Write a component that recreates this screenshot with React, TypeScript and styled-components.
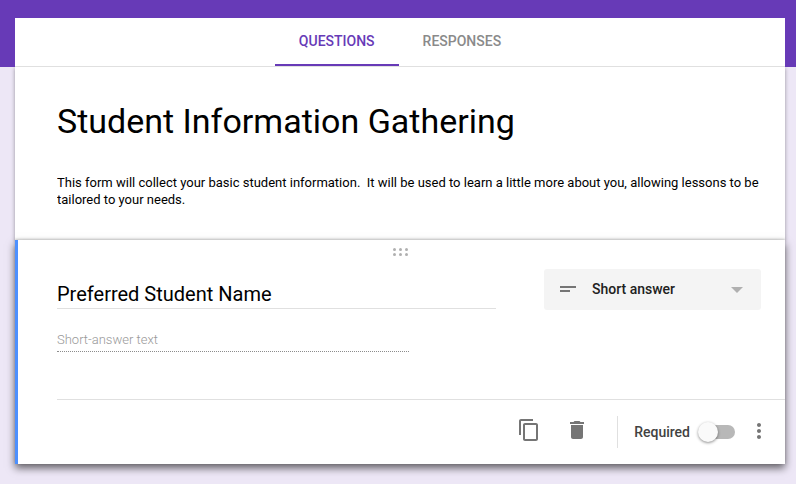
import React from "react";
import styled, { createGlobalStyle } from "styled-components";

const GlobalStyle = createGlobalStyle`
  * { box-sizing: border-box; }
  body {
    margin: 0;
    background: #ede7f6;
    font-family: Roboto, "Liberation Sans", sans-serif;
    color: #000;
  }
  button, input, textarea, select { font: inherit; color: inherit; }
`;

const Banner = styled.header`
  position: relative;
  z-index: 1;
  padding: 18px 11px 0 15px;
  background: #673ab7;
`;

const Tabs = styled.nav`
  display: flex;
  justify-content: center;
  background: #fff;
  border-bottom: 1px solid #e0e0e0;
`;

const Tab = styled.button<{ $active?: boolean }>`
  height: 48px;
  padding: 0 24px;
  border: 0;
  border-bottom: 2px solid ${(p) => (p.$active ? "#673ab7" : "transparent")};
  background: none;
  font-size: 14px;
  font-weight: 500;
  line-height: 20px;
  color: ${(p) => (p.$active ? "#673ab7" : "#8a8a8a")};
  cursor: pointer;
`;

const Main = styled.main`
  padding: 0 11px 20px 15px;
`;

const FormHeader = styled.section`
  padding: 32px 24px 32px 42px;
  background: #fff;
  box-shadow: 0 1px 4px rgba(0, 0, 0, 0.37);
`;

const FormTitle = styled.input`
  display: block;
  width: 100%;
  height: 44px;
  padding: 0;
  border: 0;
  outline: 0;
  background: none;
  font-size: 34px;
  line-height: 44px;
`;

const Description = styled.textarea`
  display: block;
  width: 100%;
  height: 34px;
  margin-top: 31px;
  padding: 0;
  border: 0;
  outline: 0;
  resize: none;
  overflow: hidden;
  background: none;
  font-size: 13px;
  line-height: 17px;
`;

const QuestionCard = styled.section`
  border-left: 3px solid #4d90fe;
  background: #fff;
  box-shadow:
    0 -1px 2px rgba(0, 0, 0, 0.16),
    0 4px 8px rgba(0, 0, 0, 0.6);
`;

const DragHandle = styled.button`
  display: flex;
  justify-content: center;
  width: 100%;
  height: 29px;
  padding: 8px 0 0;
  border: 0;
  background: none;
  color: #b0b0b0;
  cursor: move;
`;

const QuestionBody = styled.div`
  padding: 0 24px 47px 39px;
`;

const QuestionRow = styled.div`
  display: flex;
  align-items: flex-start;
  gap: 48px;
`;

const QuestionTitle = styled.input`
  flex: 1;
  min-width: 0;
  height: 40px;
  padding: 10px 0 0;
  border: 0;
  border-bottom: 1px solid #e0e0e0;
  outline: 0;
  background: none;
  font-size: 20px;
`;

const TypePicker = styled.div`
  position: relative;
  width: 217px;
  color: #757575;
`;

const TypeSelect = styled.select`
  display: block;
  appearance: none;
  width: 100%;
  height: 41px;
  padding: 0 40px 2px 48px;
  border: 0;
  border-radius: 3px;
  background: #f4f4f4;
  font-size: 14px;
  font-weight: 500;
  color: #212121;
`;

const TypeIcon = styled.svg`
  position: absolute;
  left: 12px;
  top: 8px;
  pointer-events: none;
`;

const Caret = styled.svg`
  position: absolute;
  right: 18px;
  top: 18px;
  color: #b0b0b0;
  pointer-events: none;
`;

const ShortAnswer = styled.input`
  display: block;
  width: 50%;
  height: 24px;
  margin-top: 18px;
  padding: 0;
  border: 0;
  border-bottom: 1px dotted #8c8c8c;
  outline: 0;
  background: none;
  font-size: 13px;
  &::placeholder {
    color: #999;
    font-weight: 300;
    opacity: 1;
  }
`;

const Footer = styled.footer`
  display: flex;
  align-items: center;
  justify-content: flex-end;
  height: 65px;
  margin-left: 39px;
  padding-right: 14px;
  border-top: 1px solid #e0e0e0;
`;

const Actions = styled.div`
  display: flex;
  gap: 24px;
  padding-bottom: 4px;
`;

const IconButton = styled.button`
  display: flex;
  padding: 0;
  border: 0;
  background: none;
  color: #757575;
  cursor: pointer;
`;

const MoreButton = styled(IconButton)`
  padding-bottom: 2px;
`;

const Divider = styled.div`
  width: 1px;
  height: 32px;
  margin: 0 16px 0 28px;
  background: #e0e0e0;
`;

const RequiredLabel = styled.label`
  display: flex;
  align-items: center;
  gap: 8px;
  margin-right: 12px;
  font-size: 14px;
  font-weight: 500;
  color: #424242;
`;

const Switch = styled.input`
  position: relative;
  appearance: none;
  width: 37px;
  height: 20px;
  margin: 0;
  cursor: pointer;
  &::before {
    content: "";
    position: absolute;
    inset: 3px 0 3px 2px;
    border-radius: 7px;
    background: #b8b8b8;
  }
  &::after {
    content: "";
    position: absolute;
    left: 0;
    top: 0;
    width: 20px;
    height: 20px;
    border-radius: 50%;
    background: #fafafa;
    box-shadow: 0 1px 3px rgba(0, 0, 0, 0.45);
  }
  &:checked::before { background: #b39ddb; }
  &:checked::after { left: 17px; background: #673ab7; }
`;

const Icon = ({ d }: { d: string }) => (
  <svg width="24" height="24" viewBox="0 0 24 24" fill="currentColor" aria-hidden="true">
    <path d={d} />
  </svg>
);

const COPY =
  "M16 1H4c-1.1 0-2 .9-2 2v14h2V3h12V1zm3 4H8c-1.1 0-2 .9-2 2v14c0 1.1.9 2 2 2h11c1.1 0 2-.9 2-2V7c0-1.1-.9-2-2-2zm0 16H8V7h11v14z";
const TRASH =
  "M6 19c0 1.1.9 2 2 2h8c1.1 0 2-.9 2-2V7H6v12zM19 4h-3.500l-1-1h-5l-1 1H5v2h14V4z";
const MORE =
  "M12 8c1.100 0 2-.9 2-2s-.9-2-2-2-2 .9-2 2 .9 2 2 2zm0 2c-1.100 0-2 .9-2 2s.9 2 2 2 2-.9 2-2-.9-2-2-2zm0 6c-1.100 0-2 .9-2 2s.9 2 2 2 2-.9 2-2-.9-2-2-2z";

export default function App() {
  return (
    <>
      <GlobalStyle />
      <Banner>
        <Tabs aria-label="Form sections">
          <Tab type="button" $active>QUESTIONS</Tab>
          <Tab type="button">RESPONSES</Tab>
        </Tabs>
      </Banner>
      <Main>
        <FormHeader>
          <FormTitle aria-label="Form title" defaultValue="Student Information Gathering" />
          <Description
            aria-label="Form description"
            defaultValue="This form will collect your basic student information.  It will be used to learn a little more about you, allowing lessons to be tailored to your needs."
          />
        </FormHeader>
        <QuestionCard>
          <DragHandle type="button" aria-label="Move question">
            <svg width="17" height="8" viewBox="0 0 17 8" fill="currentColor" aria-hidden="true">
              {[1.5, 7.5, 13.5].map((x) => (
                <React.Fragment key={x}>
                  <circle cx={x} cy="1.5" r="1.5" />
                  <circle cx={x} cy="6.5" r="1.5" />
                </React.Fragment>
              ))}
            </svg>
          </DragHandle>
          <QuestionBody>
            <QuestionRow>
              <QuestionTitle aria-label="Question" defaultValue="Preferred Student Name" />
              <TypePicker>
                <TypeSelect aria-label="Question type" defaultValue="short">
                  <option value="short">Short answer</option>
                </TypeSelect>
                <TypeIcon width="24" height="24" viewBox="0 0 24 24" fill="currentColor" aria-hidden="true">
                  <path d="M4 9h16v2H4zM4 13h10v2H4z" />
                </TypeIcon>
                <Caret width="12" height="6" viewBox="0 0 12 6" fill="currentColor" aria-hidden="true">
                  <path d="M0 0h12L6 6z" />
                </Caret>
              </TypePicker>
            </QuestionRow>
            <ShortAnswer aria-label="Answer" placeholder="Short-answer text" readOnly />
          </QuestionBody>
          <Footer>
            <Actions>
              <IconButton type="button" aria-label="Duplicate"><Icon d={COPY} /></IconButton>
              <IconButton type="button" aria-label="Delete"><Icon d={TRASH} /></IconButton>
            </Actions>
            <Divider />
            <RequiredLabel>
              Required
              <Switch type="checkbox" role="switch" />
            </RequiredLabel>
            <MoreButton type="button" aria-label="More options"><Icon d={MORE} /></MoreButton>
          </Footer>
        </QuestionCard>
      </Main>
    </>
  );
}
